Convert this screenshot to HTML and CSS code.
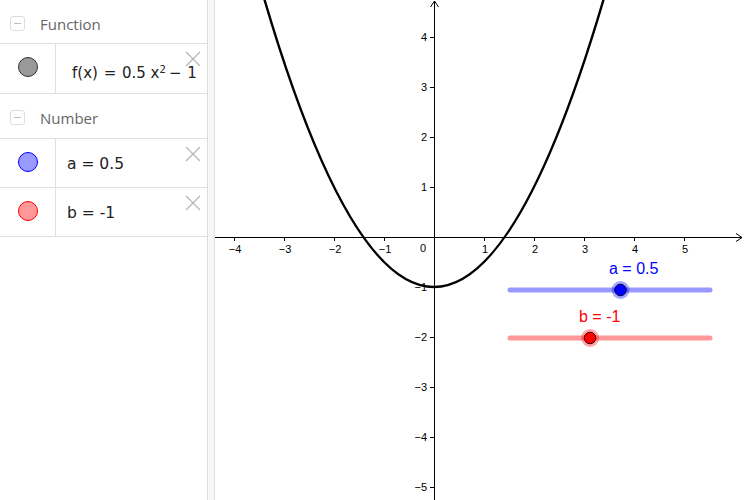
FILE: index.html
```html
<!DOCTYPE html>
<html>
<head>
<meta charset="utf-8">
<link rel="stylesheet" href="styles.css">
</head>
<body>
<div class="app">
  <div class="algebra">
    <div class="group-head head-function">
      <span class="toggle"></span>
      <span class="group-title">Function</span>
    </div>
    <div class="item item-f">
      <div class="marble-col"><span class="marble marble-gray"></span></div>
      <div class="expr expr-f">f(x) <span class="op">=</span> 0.5 x<sup>2</sup><span class="op op-minus">−</span> 1</div>
      <span class="close"><svg width="16" height="16" viewBox="0 0 16 16"><path d="M1 1L15 15M15 1L1 15" stroke="#b8b8b8" stroke-width="1.4" fill="none"/></svg></span>
    </div>
    <div class="group-head head-number">
      <span class="toggle"></span>
      <span class="group-title">Number</span>
    </div>
    <div class="item item-num">
      <div class="marble-col"><span class="marble marble-blue"></span></div>
      <div class="expr">a = 0.5</div>
      <span class="close"><svg width="16" height="16" viewBox="0 0 16 16"><path d="M1 1L15 15M15 1L1 15" stroke="#b8b8b8" stroke-width="1.4" fill="none"/></svg></span>
    </div>
    <div class="item item-num">
      <div class="marble-col"><span class="marble marble-red"></span></div>
      <div class="expr">b = -1</div>
      <span class="close"><svg width="16" height="16" viewBox="0 0 16 16"><path d="M1 1L15 15M15 1L1 15" stroke="#b8b8b8" stroke-width="1.4" fill="none"/></svg></span>
    </div>
  </div>
  <div class="splitter"></div>
  <div class="graphics">
    <svg class="plot" width="530" height="500" viewBox="215 0 530 500">
      <g stroke="#000" stroke-width="1" fill="none">
        <line x1="215" y1="237.5" x2="742" y2="237.5"/>
        <path d="M736 233.5L742 237.5L736 241.5"/>
        <line x1="434.5" y1="500" x2="434.5" y2="1"/>
        <path d="M430.5 7L434.5 1L438.5 7"/>
        <path d="M234.5 237v4M284.5 237v4M334.5 237v4M384.5 237v4M484.5 237v4M534.5 237v4M584.5 237v4M634.5 237v4M684.5 237v4"/>
        <path d="M430 37.5h4M430 87.5h4M430 137.5h4M430 187.5h4M430 287.5h4M430 337.5h4M430 387.5h4M430 437.5h4M430 487.5h4"/>
      </g>
      <g class="ticklbl" text-anchor="middle">
        <text x="235" y="253">−4</text>
        <text x="285" y="253">−3</text>
        <text x="335" y="253">−2</text>
        <text x="385" y="253">−1</text>
        <text x="423" y="252">0</text>
        <text x="485" y="253">1</text>
        <text x="535" y="253">2</text>
        <text x="585" y="253">3</text>
        <text x="635" y="253">4</text>
        <text x="685" y="253">5</text>
      </g>
      <g class="ticklbl" text-anchor="end">
        <text x="427" y="41">4</text>
        <text x="427" y="91">3</text>
        <text x="427" y="141">2</text>
        <text x="427" y="191">1</text>
        <text x="427" y="291">−1</text>
        <text x="427" y="341">−2</text>
        <text x="427" y="391">−3</text>
        <text x="427" y="441">−4</text>
        <text x="427" y="491">−5</text>
      </g>
      <path d="M264 -2Q434 576 604 -2" stroke="#000" stroke-width="2.4" fill="none"/>
      <line x1="510" y1="290" x2="710" y2="290" stroke="#9999ff" stroke-width="5" stroke-linecap="round"/>
      <circle cx="620.5" cy="290" r="9" fill="#0000ff" fill-opacity="0.35"/>
      <circle cx="620.5" cy="290" r="5.8" fill="#0000ff" stroke="#000033" stroke-width="1"/>
      <text class="slbl slbl-a" x="609" y="274">a = 0.5</text>
      <line x1="510" y1="338" x2="710" y2="338" stroke="#ff9999" stroke-width="5" stroke-linecap="round"/>
      <circle cx="590" cy="338" r="9" fill="#ff0000" fill-opacity="0.35"/>
      <circle cx="590" cy="338" r="5.8" fill="#ff0000" stroke="#330000" stroke-width="1"/>
      <text class="slbl slbl-b" x="579" y="322">b = -1</text>
    </svg>
  </div>
</div>
</body>
</html>
```
FILE: styles.css
```css
html, body {
  margin: 0;
  padding: 0;
  background: #fff;
}
.app {
  display: flex;
  width: 745px;
  height: 500px;
  overflow: hidden;
}
.algebra {
  width: 207px;
  border-right: 1px solid #dcdcdc;
  background: #fff;
  display: flex;
  flex-direction: column;
  flex: none;
}
.splitter {
  width: 6px;
  background: #f7f7f7;
  border-right: 1px solid #e0e0e0;
  flex: none;
}
.graphics {
  flex: 1;
  position: relative;
  background: #fff;
}
.plot {
  display: block;
}
.group-head {
  display: flex;
  align-items: center;
  border-bottom: 1px solid #e0e0e0;
  box-sizing: border-box;
  padding-left: 10px;
}
.head-function {
  height: 44px;
  padding-top: 4px;
}
.head-number {
  height: 45px;
  padding-top: 3px;
}
.toggle {
  width: 13px;
  height: 13px;
  border: 1px solid #dddddd;
  border-radius: 3px;
  position: relative;
  flex: none;
  margin-top: -1px;
}
.toggle::after {
  content: "";
  position: absolute;
  left: 3px;
  right: 3px;
  top: 6px;
  height: 1px;
  background: #bdbdbd;
}
.group-title {
  margin-left: 15px;
  font-family: "Open Sans", "DejaVu Sans", sans-serif;
  font-size: 15px;
  color: #666;
}
.item {
  display: flex;
  position: relative;
  border-bottom: 1px solid #e0e0e0;
  box-sizing: border-box;
}
.item-f {
  height: 50px;
}
.item-num {
  height: 49px;
}
.marble-col {
  width: 56px;
  border-right: 1px solid #e0e0e0;
  display: flex;
  justify-content: center;
  align-items: center;
  flex: none;
  padding-bottom: 3px;
  box-sizing: border-box;
}
.marble {
  width: 18px;
  height: 18px;
  border-radius: 50%;
  display: block;
}
.marble-gray {
  background: #999;
  border: 1px solid #333;
}
.marble-blue {
  background: #9999ff;
  border: 1px solid #0000ff;
}
.marble-red {
  background: #ff9999;
  border: 1px solid #ff0000;
}
.expr {
  font-family: "DejaVu Sans", sans-serif;
  font-size: 15.5px;
  color: #222;
  display: flex;
  align-items: center;
  padding-left: 11px;
  padding-top: 2px;
  white-space: pre;
}
.expr-f {
  padding-left: 16px;
  padding-top: 9px;
  font-size: 15px;
}
.op {
  margin: 0 1px;
}
.op-minus {
  margin-left: 3px;
}
.expr sup {
  font-size: 10px;
  position: relative;
  top: -4px;
  vertical-align: baseline;
}
.close {
  position: absolute;
  top: 7px;
  right: 6px;
  width: 16px;
  height: 16px;
  display: block;
}
.close svg {
  display: block;
}
.ticklbl text {
  font-family: "Liberation Sans", Arial, sans-serif;
  font-size: 11px;
  fill: #000;
}
.slbl {
  font-family: "Liberation Sans", Arial, sans-serif;
  font-size: 16px;
}
.slbl-a {
  fill: #0000ff;
}
.slbl-b {
  fill: #ff0000;
}
```
